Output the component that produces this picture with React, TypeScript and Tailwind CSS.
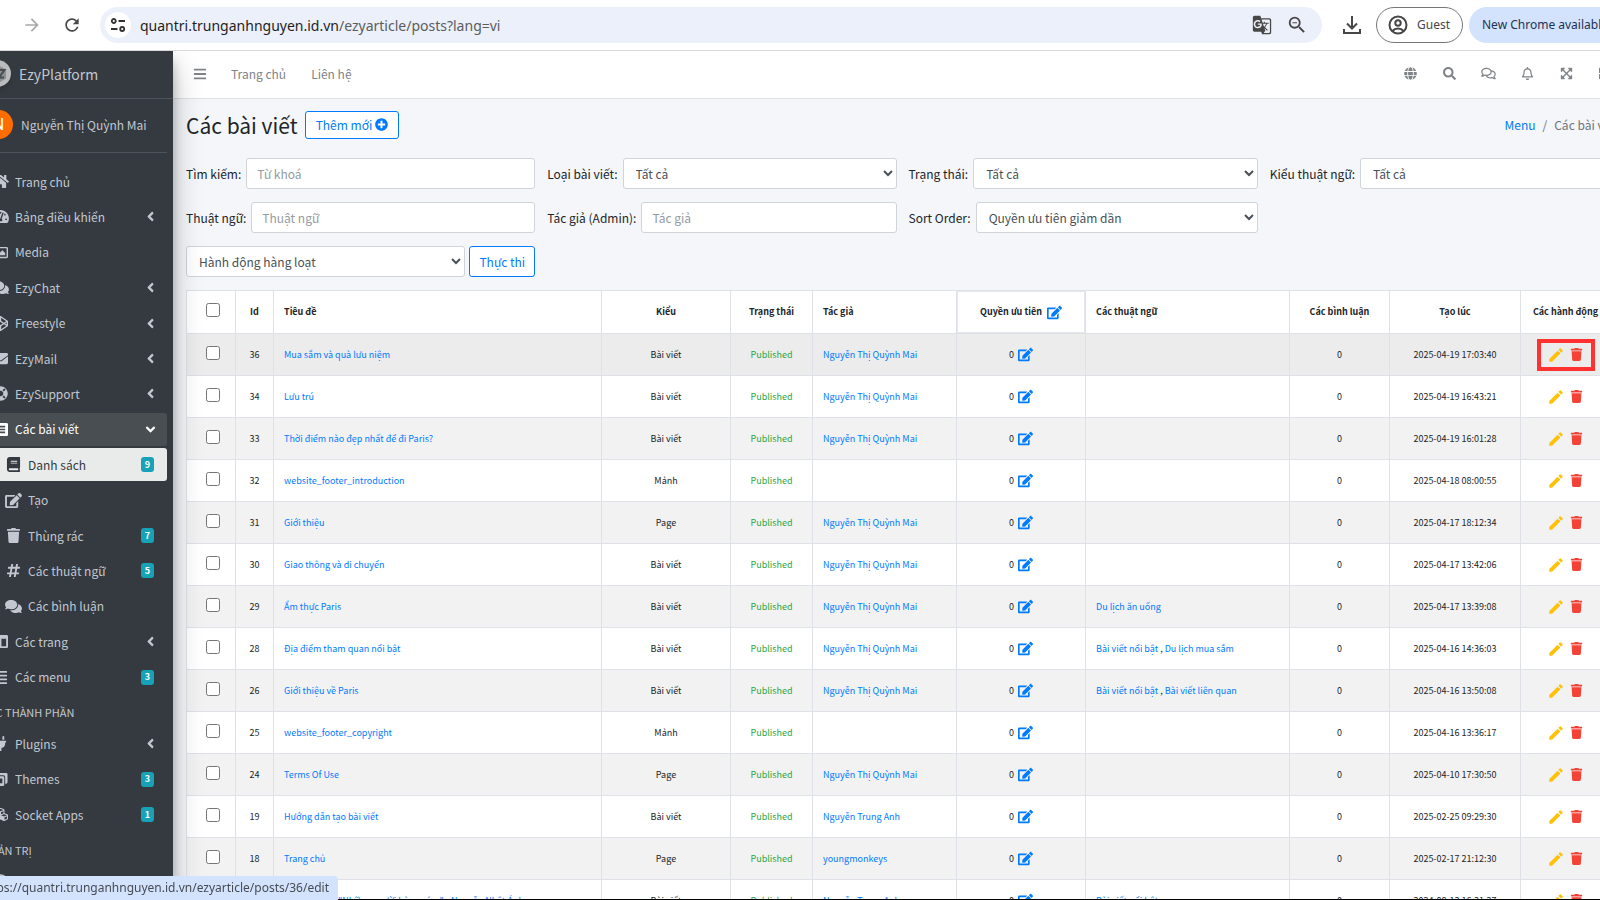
import React from "react";
import {
  FaAlignJustify,
  FaAngleDown,
  FaAngleLeft,
  FaBars,
  FaBook,
  FaCodepen,
  FaColumns,
  FaComments,
  FaCubes,
  FaEdit,
  FaEnvelope,
  FaExpandArrowsAlt,
  FaGlobe,
  FaHashtag,
  FaHome,
  FaLifeRing,
  FaListAlt,
  FaPlug,
  FaPlusCircle,
  FaRegBell,
  FaRegComments,
  FaRegImage,
  FaSearch,
  FaTachometerAlt,
  FaThLarge,
  FaTrash,
  FaUserCircle,
} from "react-icons/fa";
import { MdArrowForward, MdCreate, MdGTranslate, MdRefresh, MdZoomOut } from "react-icons/md";
import type { IconType } from "react-icons";

type NavItem = {
  label: string;
  icon: IconType;
  sub?: boolean;
  chevron?: boolean;
  badge?: number;
  state?: "open" | "current";
};

const mainNav: NavItem[] = [
  { label: "Trang chủ", icon: FaHome },
  { label: "Bảng điều khiển", icon: FaTachometerAlt, chevron: true },
  { label: "Media", icon: FaRegImage },
  { label: "EzyChat", icon: FaComments, chevron: true },
  { label: "Freestyle", icon: FaCodepen, chevron: true },
  { label: "EzyMail", icon: FaEnvelope, chevron: true },
  { label: "EzySupport", icon: FaLifeRing, chevron: true },
  { label: "Các bài viết", icon: FaListAlt, state: "open" },
  { label: "Danh sách", icon: FaBook, sub: true, badge: 9, state: "current" },
  { label: "Tạo", icon: FaEdit, sub: true },
  { label: "Thùng rác", icon: FaTrash, sub: true, badge: 7 },
  { label: "Các thuật ngữ", icon: FaHashtag, sub: true, badge: 5 },
  { label: "Các bình luận", icon: FaComments, sub: true },
  { label: "Các trang", icon: FaColumns, chevron: true },
  { label: "Các menu", icon: FaAlignJustify, badge: 3 },
];

const componentNav: NavItem[] = [
  { label: "Plugins", icon: FaPlug, chevron: true },
  { label: "Themes", icon: ThemesIcon as IconType, badge: 3 },
  { label: "Socket Apps", icon: FaCubes, badge: 1 },
];

const adminNav: NavItem[] = [{ label: "Quản trị viên", icon: FaUserCircle }];

type Post = {
  id: number;
  title: string;
  kind: string;
  author?: string;
  terms?: string[];
  created: string;
};

const MAI = "Nguyễn Thị Quỳnh Mai";

const posts: Post[] = [
  { id: 36, title: "Mua sắm và quà lưu niệm", kind: "Bài viết", author: MAI, created: "2025-04-19 17:03:40" },
  { id: 34, title: "Lưu trú", kind: "Bài viết", author: MAI, created: "2025-04-19 16:43:21" },
  { id: 33, title: "Thời điểm nào đẹp nhất để đi Paris?", kind: "Bài viết", author: MAI, created: "2025-04-19 16:01:28" },
  { id: 32, title: "website_footer_introduction", kind: "Mảnh", created: "2025-04-18 08:00:55" },
  { id: 31, title: "Giới thiệu", kind: "Page", author: MAI, created: "2025-04-17 18:12:34" },
  { id: 30, title: "Giao thông và di chuyển", kind: "Bài viết", author: MAI, created: "2025-04-17 13:42:06" },
  { id: 29, title: "Ẩm thực Paris", kind: "Bài viết", author: MAI, terms: ["Du lịch ăn uống"], created: "2025-04-17 13:39:08" },
  { id: 28, title: "Địa điểm tham quan nổi bật", kind: "Bài viết", author: MAI, terms: ["Bài viết nổi bật", "Du lịch mua sắm"], created: "2025-04-16 14:36:03" },
  { id: 26, title: "Giới thiệu về Paris", kind: "Bài viết", author: MAI, terms: ["Bài viết nổi bật", "Bài viết liên quan"], created: "2025-04-16 13:50:08" },
  { id: 25, title: "website_footer_copyright", kind: "Mảnh", created: "2025-04-16 13:36:17" },
  { id: 24, title: "Terms Of Use", kind: "Page", author: MAI, created: "2025-04-10 17:30:50" },
  { id: 19, title: "Hướng dẫn tạo bài viết", kind: "Bài viết", author: "Nguyễn Trung Anh", created: "2025-02-25 09:29:30" },
  { id: 18, title: "Trang chủ", kind: "Page", author: "youngmonkeys", created: "2025-02-17 21:12:30" },
  { id: 17, title: "Giới thiệu về \"Những người hàng xóm\" - Nguyễn Nhật Ánh", kind: "Bài viết", author: "Nguyễn Trung Anh", terms: ["Bài viết nổi bật"], created: "2024-08-13 16:31:27" },
];

function ThemesIcon({ className }: { className?: string }) {
  return (
    <svg viewBox="0 0 16 16" className={className} fill="currentColor" aria-hidden="true">
      <path d="M5 1h9a1.500 1.500 0 0 1 1.500 1.500V11A1.500 1.500 0 0 1 14 12.500h-1V5.500A2 2 0 0 0 11 3.500H3.500v-1A1.500 1.500 0 0 1 5 1z" />
      <path d="M2 4.500h8.500A1.500 1.500 0 0 1 12 6v7.500a1.500 1.500 0 0 1-1.500 1.500H2A1.500 1.500 0 0 1 .5 13.500V6A1.500 1.500 0 0 1 2 4.500zM7 7v5h3V7z" fillRule="evenodd" />
    </svg>
  );
}

function TuneIcon() {
  return (
    <svg viewBox="0 0 16 16" className="size-4" fill="none" stroke="#333" strokeWidth="1.8" aria-hidden="true">
      <circle cx="3.800" cy="4" r="2" />
      <path d="M8.500 4H15M1 12h6.500" />
      <circle cx="12.200" cy="12" r="2" />
    </svg>
  );
}

function DownloadIcon() {
  return (
    <svg viewBox="0 0 20 20" className="size-5" fill="none" stroke="#474747" strokeWidth="2" aria-hidden="true">
      <path d="M10 1v12M5 8.500l5 5 5-5M2 14v4h16v-4" />
    </svg>
  );
}

function GuestIcon() {
  return (
    <svg viewBox="0 0 20 20" className="size-5" fill="none" stroke="#474747" strokeWidth="2" aria-hidden="true">
      <circle cx="10" cy="10" r="8.500" />
      <circle cx="10" cy="8" r="2.700" />
      <path d="M4.500 16c1.500-1.800 3.400-2.500 5.500-2.500s4 .7 5.500 2.500" />
    </svg>
  );
}

function BrowserBar() {
  return (
    <div className="relative z-30 flex h-[51px] shrink-0 items-center overflow-hidden border-b border-[#d9d9d9] bg-white pl-[22px] font-['Noto_Sans',sans-serif]">
      <button aria-label="Forward" className="text-[#a9a9a9]">
        <MdArrowForward className="size-5" />
      </button>
      <button aria-label="Reload" className="ml-5 text-[#474747]">
        <MdRefresh className="size-5" />
      </button>
      <div className="ml-[18px] flex h-9 min-w-0 flex-1 items-center rounded-full bg-[#ecf0fa] pr-3.5 pl-[5px]">
        <button aria-label="Site information" className="flex size-[26px] items-center justify-center rounded-full bg-white">
          <TuneIcon />
        </button>
        <div className="ml-[9px] flex-1 truncate pt-0.5 text-[14px] leading-6 text-[#1f1f1f]">
          quantri.trunganhnguyen.id.vn<span className="text-[#5a5d62]">/ezyarticle/posts?lang=vi</span>
        </div>
        <button aria-label="Translate" className="text-[#474747]">
          <MdGTranslate className="size-5" />
        </button>
        <button aria-label="Zoom" className="ml-[14px] text-[#474747]">
          <MdZoomOut className="size-[22px]" />
        </button>
      </div>
      <button aria-label="Downloads" className="ml-5">
        <DownloadIcon />
      </button>
      <button className="ml-[14px] flex h-9 w-[87px] items-center gap-[9px] rounded-full border border-[#747775] pl-[11px] text-[12px] text-[#474747]">
        <GuestIcon />
        Guest
      </button>
      <button className="-mr-10 ml-1.5 h-9 w-[171px] rounded-full bg-[#d3e3fd] pl-[13px] text-left text-[12px] whitespace-nowrap text-[#1c3255]">
        New Chrome available
      </button>
    </div>
  );
}

function NavLink({ item }: { item: NavItem }) {
  const Icon = item.icon;
  const tone =
    item.state === "open"
      ? "bg-[#494e53] text-white"
      : item.state === "current"
        ? "bg-[#e9ebeb] text-[#343a40]"
        : "text-[#c2c7d0]";
  return (
    <li>
      <a href="#" className={`flex h-[33px] items-center rounded-[3px] pr-[13px] ${item.sub ? "pl-[13px]" : ""} ${tone}`}>
        <span className="flex w-6 justify-center">
          <Icon className="h-[15px] w-[17px]" />
        </span>
        <span className="ml-[3px] flex-1 whitespace-nowrap">{item.label}</span>
        {item.chevron && <FaAngleLeft className="-mr-1 size-[15px]" />}
        {item.state === "open" && <FaAngleDown className="-mr-1 size-[15px]" />}
        {item.badge && (
          <span className="flex h-[15px] w-[13px] items-center justify-center rounded-[3px] bg-[#17a2b8] text-[9px] font-bold text-white">
            {item.badge}
          </span>
        )}
      </a>
    </li>
  );
}

function Sidebar() {
  return (
    <aside className="z-20 w-[173px] shrink-0 overflow-hidden bg-[#343a40] text-[12px] text-[#c2c7d0] shadow-[0_14px_28px_rgba(0,0,0,0.25),0_10px_10px_rgba(0,0,0,0.22)] [clip-path:inset(0_-40px_0_0)]">
      <div className="-ml-4">
        <a href="#" className="flex h-12 items-center border-b border-[#4b545c] pb-0.5 text-[14px]">
          <span className="flex size-[27px] items-center justify-center rounded-full bg-[#b9bbbd] shadow-md">
            <svg viewBox="0 0 20 20" className="size-5" aria-hidden="true">
              <path d="M10 1l8 4.500v9L10 19l-8-4.500v-9z" fill="#8d9092" />
              <path d="M8 6h8.500L11 13.500h5" fill="none" stroke="#4a4d50" strokeWidth="2" />
            </svg>
          </span>
          <span className="ml-2">EzyPlatform</span>
        </a>
        <a href="#" className="mr-1.5 flex h-[54px] items-center border-b border-[#4b545c] pb-0.5">
          <span className="flex size-[29px] shrink-0 items-center justify-center rounded-full bg-[#ff6d00] font-['Roboto',sans-serif] text-[16px] text-white">
            N
          </span>
          <span className="ml-2 whitespace-nowrap">Nguyễn Thị Quỳnh Mai</span>
        </a>
      </div>
      <nav className="mr-1.5 -ml-3 pt-3">
        <ul className="grid h-[531px] auto-rows-fr">
          {mainNav.map((item) => (
            <NavLink key={item.label} item={item} />
          ))}
        </ul>
        <h2 className="-ml-1.5 flex h-[31px] items-center text-[11px]">CÁC THÀNH PHẦN</h2>
        <ul className="grid h-[107px] auto-rows-fr">
          {componentNav.map((item) => (
            <NavLink key={item.label} item={item} />
          ))}
        </ul>
        <h2 className="-ml-1.5 flex h-[31px] items-center text-[11px]">QUẢN TRỊ</h2>
        <ul>
          {adminNav.map((item) => (
            <NavLink key={item.label} item={item} />
          ))}
        </ul>
      </nav>
    </aside>
  );
}

function TopNav() {
  const actions: [string, IconType][] = [
    ["Ngôn ngữ", FaGlobe],
    ["Tìm kiếm", FaSearch],
    ["Tin nhắn", FaRegComments],
    ["Thông báo", FaRegBell],
    ["Toàn màn hình", FaExpandArrowsAlt],
    ["Ứng dụng", FaThLarge],
  ];
  return (
    <header className="flex h-12 items-center border-b border-[#dee2e6] bg-white pb-0.5 pl-5 text-[#808488]">
      <button aria-label="Thu gọn menu">
        <FaBars className="size-[14px]" />
      </button>
      <a href="#" className="ml-6">Trang chủ</a>
      <a href="#" className="ml-[25px]">Liên hệ</a>
      <div className="-mr-1.5 ml-auto flex">
        {actions.map(([label, Icon]) => (
          <button key={label} aria-label={label} className="flex w-[39px] justify-center">
            <Icon className="h-[13px] w-[15px]" />
          </button>
        ))}
      </div>
    </header>
  );
}

const control = "h-[31px] min-w-0 flex-1 rounded-[3px] border border-[#ced4da] bg-white text-[#495057]";

function TextFilter({ id, label, placeholder }: { id: string; label: string; placeholder: string }) {
  return (
    <div className="flex items-center gap-[5px]">
      <label htmlFor={id} className="whitespace-nowrap">{label}</label>
      <input id={id} type="text" placeholder={placeholder} className={`${control} px-2.5 placeholder:text-[#939ba2]`} />
    </div>
  );
}

function SelectFilter({ id, label, value }: { id: string; label: string; value: string }) {
  return (
    <div className="flex items-center gap-[5px]">
      <label htmlFor={id} className="whitespace-nowrap">{label}</label>
      <select id={id} className={`${control} pl-2`}>
        <option>{value}</option>
      </select>
    </div>
  );
}

function Filters() {
  return (
    <form className="grid grid-cols-4 gap-x-3 gap-y-[13px]">
      <TextFilter id="keyword" label="Tìm kiếm:" placeholder="Từ khoá" />
      <SelectFilter id="type" label="Loại bài viết:" value="Tất cả" />
      <SelectFilter id="status" label="Trạng thái:" value="Tất cả" />
      <SelectFilter id="term-type" label="Kiểu thuật ngữ:" value="Tất cả" />
      <TextFilter id="term" label="Thuật ngữ:" placeholder="Thuật ngữ" />
      <TextFilter id="author" label="Tác giả (Admin):" placeholder="Tác giả" />
      <SelectFilter id="order" label="Sort Order:" value="Quyền ưu tiên giảm dần" />
      <div className="col-start-1 flex gap-1">
        <select aria-label="Hành động hàng loạt" className={`${control} pl-2`}>
          <option>Hành động hàng loạt</option>
        </select>
        <button type="button" className="h-[31px] w-[66px] rounded-[3px] border border-[#007bff] bg-white text-[#007bff]">
          Thực thi
        </button>
      </div>
    </form>
  );
}

const cell = "border border-[#dee2e6] px-2.5";
const checkCell = "border border-[#dee2e6] pr-2 pl-3 text-center";

function PostRow({ post, marked }: { post: Post; marked: boolean }) {
  return (
    <tr className={`h-[42px] ${marked ? "bg-[#ececec]" : "odd:bg-[#f2f2f2]"}`}>
      <td className={checkCell}>
        <input type="checkbox" aria-label={`Chọn ${post.title}`} className="mb-1 size-[14px] align-middle" />
      </td>
      <td className={`${cell} text-center`}>{post.id}</td>
      <td className={cell}>
        <a href="#" className="text-[#007bff]">{post.title}</a>
      </td>
      <td className={`${cell} text-center`}>{post.kind}</td>
      <td className={`${cell} text-center text-[#28a745]`}>Published</td>
      <td className={cell}>
        {post.author && <a href="#" className="text-[#007bff]">{post.author}</a>}
      </td>
      <td className={cell}>
        <div className="flex items-center justify-center gap-1">
          0
          <button aria-label="Sửa quyền ưu tiên" className="text-[#007bff]">
            <FaEdit className="size-[15px]" />
          </button>
        </div>
      </td>
      <td className={cell}>
        {post.terms?.map((term, i) => (
          <React.Fragment key={term}>
            {i > 0 && " , "}
            <a href="#" className="text-[#007bff]">{term}</a>
          </React.Fragment>
        ))}
      </td>
      <td className={`${cell} text-center`}>0</td>
      <td className={`${cell} text-center`}>{post.created}</td>
      <td className={cell}>
        <div className="relative mx-auto flex w-[34px] items-center justify-between">
          <a href="#" aria-label="Sửa" className="-ml-0.5 text-[#ffc107]">
            <MdCreate className="size-[18px]" />
          </a>
          <a href="#" aria-label="Xoá" className="text-[#f44336]">
            <FaTrash className="size-[13px]" />
          </a>
          {marked && <span className="pointer-events-none absolute -inset-x-3 -inset-y-[7px] border-4 border-[#ff3131]" />}
        </div>
      </td>
    </tr>
  );
}

function PostsTable() {
  return (
    <table className="mt-[13px] w-full table-fixed border-collapse bg-white text-[9px] whitespace-nowrap">
      <colgroup>
        <col className="w-[49px]" />
        <col className="w-[38px]" />
        <col />
        <col className="w-[129px]" />
        <col className="w-[82px]" />
        <col className="w-[144px]" />
        <col className="w-[129px]" />
        <col className="w-[204px]" />
        <col className="w-[100px]" />
        <col className="w-[131px]" />
        <col className="w-[90px]" />
      </colgroup>
      <thead>
        <tr className="h-[43px] font-bold">
          <th className={checkCell}>
            <input type="checkbox" aria-label="Chọn tất cả" className="mb-1 size-[14px] align-middle" />
          </th>
          <th className={cell}>Id</th>
          <th className={`${cell} text-left`}>Tiêu đề</th>
          <th className={cell}>Kiểu</th>
          <th className={cell}>Trạng thái</th>
          <th className={`${cell} text-left`}>Tác giả</th>
          <th className="border border-[#dee2e6] p-0">
            <button className="flex h-[42px] w-full items-center justify-center gap-[5px] border border-[#e4e8ec]">
              Quyền ưu tiên
              <FaEdit className="size-[15px] text-[#007bff]" />
            </button>
          </th>
          <th className={`${cell} text-left`}>Các thuật ngữ</th>
          <th className={cell}>Các bình luận</th>
          <th className={cell}>Tạo lúc</th>
          <th className={cell}>Các hành động</th>
        </tr>
      </thead>
      <tbody>
        {posts.map((post) => (
          <PostRow key={post.id} post={post} marked={post.id === 36} />
        ))}
      </tbody>
    </table>
  );
}

export default function App() {
  return (
    <div className="flex h-screen flex-col overflow-hidden border-b border-black bg-[#f4f6f9] font-['Noto_Sans_CJK_SC','Noto_Sans',sans-serif] text-[12px] leading-[18px] text-[#212529]">
      <BrowserBar />
      <div className="flex min-h-0 flex-1">
        <Sidebar />
        {/* the page is scrolled sideways, so its right edge runs past the window */}
        <div className="-mr-[19px] min-w-0 flex-1">
          <TopNav />
          <main className="pl-[13px]">
            <div className="flex h-[59px] items-center pb-2">
              <h1 className="text-[21px] leading-7">Các bài viết</h1>
              <button className="ml-[7px] flex h-7 items-center gap-[3px] rounded-[3px] border border-[#007bff] bg-white px-2.5 text-[#007bff]">
                Thêm mới <FaPlusCircle className="size-[13px]" />
              </button>
              <ol className="ml-auto flex gap-[7px] pr-px">
                <li><a href="#" className="text-[#007bff]">Menu</a></li>
                <li className="text-[#6c757d]">/</li>
                <li className="text-[#6c757d]">Các bài viết</li>
              </ol>
            </div>
            <Filters />
            <div className="mr-2">
              <PostsTable />
            </div>
          </main>
        </div>
      </div>
      <div className="fixed bottom-0 left-0 z-40 flex h-6 w-[338px] items-center justify-end rounded-tr-[4px] bg-[#d3e3fd] pr-[9px] font-['Noto_Sans',sans-serif] text-[12px] whitespace-nowrap text-[#474b52]">
        https://quantri.trunganhnguyen.id.vn/ezyarticle/posts/36/edit
      </div>
    </div>
  );
}
